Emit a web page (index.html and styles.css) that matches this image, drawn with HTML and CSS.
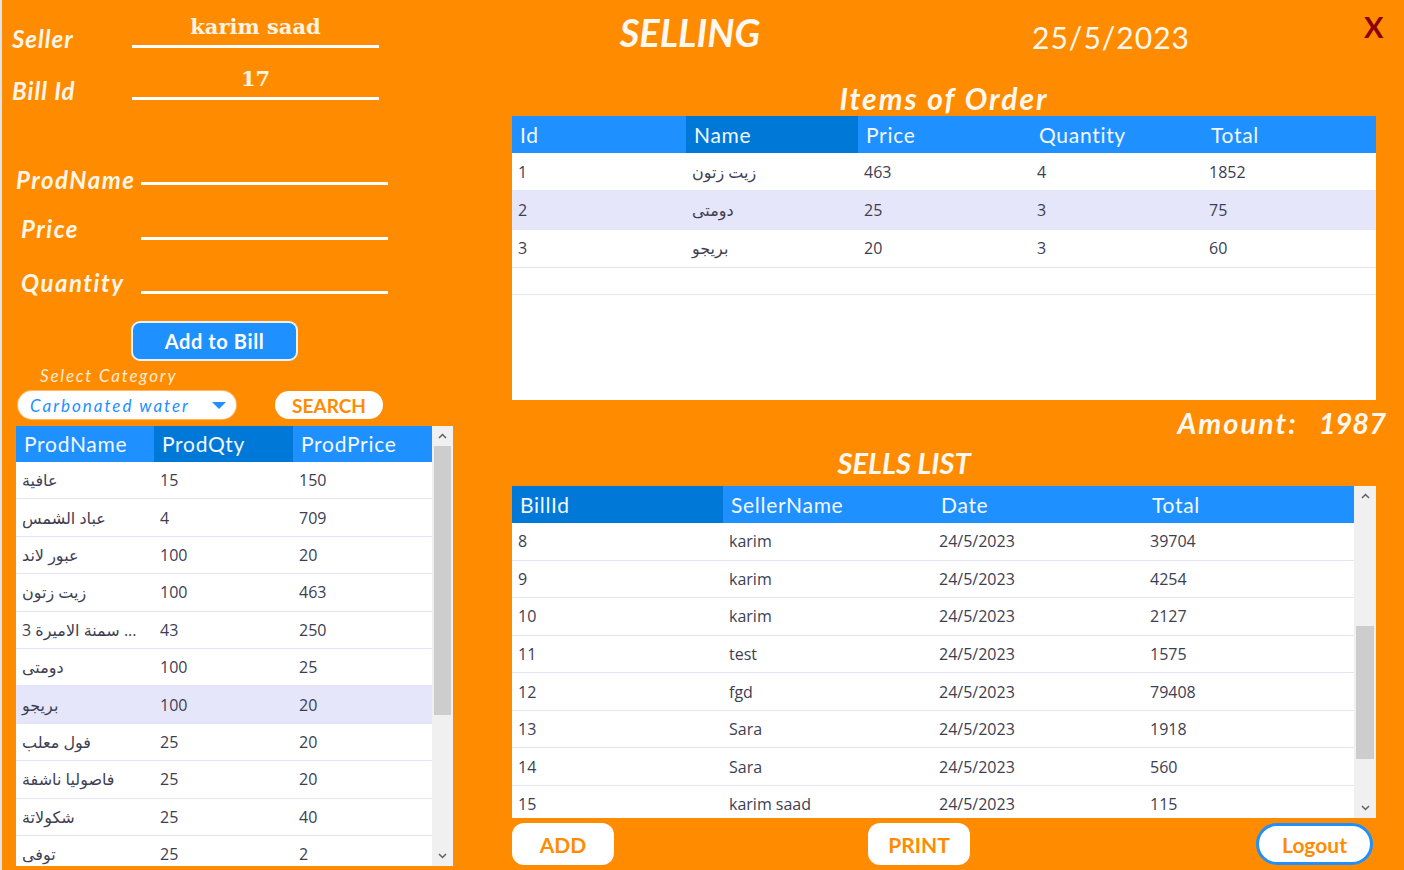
FILE: index.html
```html
<!DOCTYPE html>
<html lang="en">
<head>
<meta charset="utf-8">
<title>Selling</title>
<link rel="stylesheet" href="styles.css">
</head>
<body>
<div class="app">
  <aside class="left">
    <div class="id-row first">
      <span class="id-label">Seller</span>
      <div class="id-val">karim saad</div>
    </div>
    <div class="id-row second">
      <span class="id-label">Bill Id</span>
      <div class="id-val">17</div>
    </div>

    <div class="prod-row r-name">
      <span class="prod-label tight">ProdName</span>
      <div class="prod-line l-name"></div>
    </div>
    <div class="prod-row r-price">
      <span class="prod-label">Price</span>
      <div class="prod-line"></div>
    </div>
    <div class="prod-row r-qty">
      <span class="prod-label">Quantity</span>
      <div class="prod-line"></div>
    </div>

    <button class="btn-add-bill">Add to Bill</button>

    <div class="cat-label">Select Category</div>
    <div class="filter-row">
      <div class="combo">
        <span class="combo-text">Carbonated water</span>
        <svg class="combo-arrow" width="14" height="8" viewBox="0 0 14 8"><path d="M0 0 H14 L7 7 Z" fill="#1E90FF"/></svg>
      </div>
      <button class="btn-search">SEARCH</button>
    </div>

    <div class="grid-box prod-box">
      <div class="grid-main">
        <div class="ghead prod-cols">
          <div class="hc">ProdName</div>
          <div class="hc dark">ProdQty</div>
          <div class="hc">ProdPrice</div>
        </div>
        <div class="grow prod-cols"><div>عافية</div><div>15</div><div>150</div></div>
        <div class="grow prod-cols"><div>عباد الشمس</div><div>4</div><div>709</div></div>
        <div class="grow prod-cols"><div>عبور لاند</div><div>100</div><div>20</div></div>
        <div class="grow prod-cols"><div>زيت زتون</div><div>100</div><div>463</div></div>
        <div class="grow prod-cols"><div>سمنة الاميرة 3 ...</div><div>43</div><div>250</div></div>
        <div class="grow prod-cols"><div>دومتى</div><div>100</div><div>25</div></div>
        <div class="grow prod-cols sel"><div>بريجو</div><div>100</div><div>20</div></div>
        <div class="grow prod-cols"><div>فول معلب</div><div>25</div><div>20</div></div>
        <div class="grow prod-cols"><div>فاصوليا ناشفة</div><div>25</div><div>20</div></div>
        <div class="grow prod-cols"><div>شكولاتة</div><div>25</div><div>40</div></div>
        <div class="grow prod-cols"><div>توفى</div><div>25</div><div>2</div></div>
      </div>
      <div class="vscroll prod-scroll">
        <div class="sarrow"><svg width="9" height="6" viewBox="0 0 9 6"><path d="M1 5 L4.5 1.5 L8 5" fill="none" stroke="#606060" stroke-width="1.5"/></svg></div>
        <div class="strack"><div class="sthumb"></div></div>
        <div class="sarrow"><svg width="9" height="6" viewBox="0 0 9 6"><path d="M1 1 L4.5 4.5 L8 1" fill="none" stroke="#606060" stroke-width="1.5"/></svg></div>
      </div>
    </div>
  </aside>

  <main class="right">
    <header class="top">
      <h1 class="title">SELLING</h1>
      <div class="date">25/5/2023</div>
      <div class="close">X</div>
    </header>

    <h2 class="sec-title items-title">Items of Order</h2>
    <div class="grid-box order-box">
      <div class="grid-main">
        <div class="ghead order-cols">
          <div class="hc">Id</div>
          <div class="hc dark">Name</div>
          <div class="hc">Price</div>
          <div class="hc">Quantity</div>
          <div class="hc">Total</div>
        </div>
        <div class="grow orow order-cols"><div>1</div><div>زيت زتون</div><div>463</div><div>4</div><div>1852</div></div>
        <div class="grow orow order-cols sel"><div>2</div><div>دومتى</div><div>25</div><div>3</div><div>75</div></div>
        <div class="grow orow order-cols"><div>3</div><div>بريجو</div><div>20</div><div>3</div><div>60</div></div>
        <div class="grow newrow order-cols"></div>
      </div>
    </div>

    <div class="amount"><span class="amount-label">Amount:</span><span class="amount-value">1987</span></div>

    <h2 class="sec-title sells-title">SELLS LIST</h2>
    <div class="grid-box sells-box">
      <div class="grid-main">
        <div class="ghead sells-cols">
          <div class="hc dark">BillId</div>
          <div class="hc">SellerName</div>
          <div class="hc">Date</div>
          <div class="hc">Total</div>
        </div>
        <div class="grow srow sells-cols"><div>8</div><div>karim</div><div>24/5/2023</div><div>39704</div></div>
        <div class="grow srow sells-cols"><div>9</div><div>karim</div><div>24/5/2023</div><div>4254</div></div>
        <div class="grow srow sells-cols"><div>10</div><div>karim</div><div>24/5/2023</div><div>2127</div></div>
        <div class="grow srow sells-cols"><div>11</div><div>test</div><div>24/5/2023</div><div>1575</div></div>
        <div class="grow srow sells-cols"><div>12</div><div>fgd</div><div>24/5/2023</div><div>79408</div></div>
        <div class="grow srow sells-cols"><div>13</div><div>Sara</div><div>24/5/2023</div><div>1918</div></div>
        <div class="grow srow sells-cols"><div>14</div><div>Sara</div><div>24/5/2023</div><div>560</div></div>
        <div class="grow srow sells-cols"><div>15</div><div>karim saad</div><div>24/5/2023</div><div>115</div></div>
      </div>
      <div class="vscroll sells-scroll">
        <div class="sarrow"><svg width="9" height="6" viewBox="0 0 9 6"><path d="M1 5 L4.5 1.5 L8 5" fill="none" stroke="#606060" stroke-width="1.5"/></svg></div>
        <div class="strack"><div class="sthumb"></div></div>
        <div class="sarrow"><svg width="9" height="6" viewBox="0 0 9 6"><path d="M1 1 L4.5 4.5 L8 1" fill="none" stroke="#606060" stroke-width="1.5"/></svg></div>
      </div>
    </div>

    <div class="actions">
      <button class="btn-white btn-addbtn">ADD</button>
      <button class="btn-white btn-print">PRINT</button>
      <button class="btn-white btn-logout">Logout</button>
    </div>
  </main>
</div>
</body>
</html>
```

FILE: styles.css
```css
* { box-sizing: border-box; }

html, body {
  margin: 0;
  padding: 0;
}

body {
  width: 1404px;
  height: 870px;
  overflow: hidden;
  background: #FF8C00;
  font-family: "Lato", "DejaVu Sans", sans-serif;
  color: #fff;
}

.app {
  display: flex;
  width: 1404px;
  height: 870px;
  border-left: 2px solid #dde3ea;
}

/* ---------- left column ---------- */
.left {
  width: 453px;
  flex: none;
  display: flex;
  flex-direction: column;
}

.id-row {
  display: grid;
  grid-template-columns: 130px 247px;
  height: 36px;
  align-items: end;
}
.id-row.first { margin-top: 12px; }
.id-row.second { margin-top: 16px; }

.id-label {
  padding-left: 10px;
  font-size: 24px;
  font-weight: 700;
  font-style: italic;
  letter-spacing: 1px;
  line-height: 26px;
  margin-bottom: -4px;
  color: #FFF6EA;
}

.id-val {
  height: 36px;
  border-bottom: 3px solid #fff;
  text-align: center;
  font-family: "DejaVu Serif", "Liberation Serif", serif;
  font-weight: 700;
  font-size: 21px;
  line-height: 30px;
  color: #FFF3E2;
}

.prod-row {
  display: grid;
  grid-template-columns: 139px 247px;
  height: 30px;
  align-items: start;
}
.r-name { margin-top: 65px; }
.r-price { margin-top: 19px; }
.r-qty { margin-top: 24px; }

.prod-label {
  padding-left: 19px;
  font-size: 24px;
  font-weight: 700;
  font-style: italic;
  letter-spacing: 1.5px;
  line-height: 30px;
  color: #FFF6EA;
  white-space: nowrap;
}
.prod-label.tight { padding-left: 14px; }

.prod-line {
  height: 3px;
  background: #fff;
  margin-top: 23px;
}
.prod-line.l-name { margin-top: 17px; }

.btn-add-bill {
  width: 167px;
  height: 40px;
  margin: 23px 0 0 129px;
  background: #1E90FF;
  border: 2px solid #E6F2FF;
  border-radius: 9px;
  color: #fff;
  font-family: "Lato", sans-serif;
  font-weight: 700;
  font-size: 20px;
  letter-spacing: 0.6px;
  padding: 0;
}

.cat-label {
  margin-top: 5px;
  padding-left: 38px;
  font-size: 17px;
  font-style: italic;
  letter-spacing: 1.8px;
  line-height: 20px;
  color: #FFEBD2;
}

.filter-row {
  display: flex;
  margin-top: 5px;
  height: 28px;
}

.combo {
  margin-left: 16px;
  width: 218px;
  height: 28px;
  background: #fff;
  border-radius: 14px;
  box-shadow: 0 0 0 1px #FFB866;
  display: flex;
  align-items: center;
  justify-content: space-between;
  padding: 0 10px 0 12px;
}
.combo-text {
  color: #1E90FF;
  font-style: italic;
  font-size: 17px;
  letter-spacing: 2px;
  white-space: nowrap;
}
.combo-arrow { margin-top: 2px; flex: none; }

.btn-search {
  margin-left: 39px;
  width: 108px;
  height: 28px;
  background: #fff;
  border: none;
  border-radius: 14px;
  color: #FF8C00;
  font-family: "Lato", sans-serif;
  font-weight: 700;
  font-size: 19px;
  padding: 0;
}

/* ---------- grids ---------- */
.grid-box {
  display: flex;
  background: #fff;
  overflow: hidden;
}
.grid-main {
  flex: 1;
  overflow: hidden;
}

.ghead {
  display: grid;
  background: #1E90FF;
}
.hc {
  padding-left: 8px;
  font-size: 21px;
  letter-spacing: 0.7px;
  color: #F2F8FF;
  white-space: nowrap;
}
.hc.dark { background: #0078D7; }

.grow {
  display: grid;
  align-items: center;
  border-bottom: 1px solid #E4E4F8;
  font-family: "Open Sans", "DejaVu Sans", sans-serif;
  font-size: 16px;
  color: #3E3E52;
  white-space: nowrap;
}
.grow > div {
  padding-left: 6px;
  overflow: hidden;
}
.grow.sel { background: #E6E6FA; }

.prod-box {
  margin: 7px 0 0 14px;
  width: 437px;
  height: 440px;
}
.prod-cols { grid-template-columns: 138px 139px 139px; }
.prod-box .ghead { height: 36px; line-height: 36px; }
.prod-box .grow { height: 37.4px; }

.vscroll {
  flex: none;
  width: 21px;
  display: flex;
  flex-direction: column;
  background: #F0F0F0;
}
.sarrow {
  height: 20px;
  display: flex;
  align-items: center;
  justify-content: center;
}
.strack {
  flex: 1;
  display: flex;
  flex-direction: column;
}
.sthumb {
  margin: 0 2px;
  background: #CDCDCD;
}
.prod-scroll .sthumb { height: 269px; }
.sells-scroll .strack { padding-top: 120px; }
.sells-scroll .sthumb { height: 133px; }

/* ---------- right column ---------- */
.right {
  width: 864px;
  flex: none;
  margin-left: 57px;
  display: flex;
  flex-direction: column;
}

.top {
  display: grid;
  grid-template-columns: 356px 486px 50px;
  height: 70px;
  margin-right: -28px;
  align-items: start;
}
.title {
  margin: 0;
  padding-top: 10px;
  text-align: center;
  font-size: 38px;
  font-weight: 700;
  font-style: italic;
  line-height: 44px;
  color: #FFF8F0;
}
.date {
  padding-top: 17px;
  text-align: center;
  font-size: 30px;
  letter-spacing: 1px;
  line-height: 40px;
  color: #FFF8F0;
}
.close {
  padding-top: 9px;
  padding-left: 10px;
  font-size: 29px;
  font-weight: 700;
  line-height: 36px;
  color: #8B0000;
}

.sec-title {
  margin: 0;
  text-align: center;
  font-size: 29px;
  font-weight: 700;
  font-style: italic;
  line-height: 34px;
  color: #FFF8F0;
}
.items-title {
  margin-top: 11px;
  height: 35px;
  font-size: 30px;
  letter-spacing: 2px;
}

.order-box {
  width: 864px;
  height: 284px;
}
.order-cols { grid-template-columns: 174px 172px 173px 172px 173px; }
.order-box .ghead { height: 37px; line-height: 37px; }
.orow { height: 38.3px; }
.newrow { height: 27px; }

.amount {
  display: flex;
  justify-content: flex-end;
  gap: 21px;
  margin-right: -10px;
  margin-top: 6px;
  height: 34px;
  font-size: 29px;
  font-weight: 700;
  font-style: italic;
  line-height: 34px;
  color: #FFF8F0;
}
.amount-label { letter-spacing: 2px; }
.amount-value { letter-spacing: 0; }

.sells-title {
  margin-top: 6px;
  padding-right: 80px;
  height: 40px;
}

.sells-box {
  width: 864px;
  height: 332px;
}
.sells-cols { grid-template-columns: 211px 210px 211px 210px; }
.sells-box .ghead { height: 37px; line-height: 37px; }
.srow { height: 37.57px; }
.sells-box .vscroll { width: 22px; }

.actions {
  display: flex;
  margin-top: 5px;
  height: 42px;
}
.btn-white {
  height: 42px;
  background: #fff;
  border: none;
  border-radius: 12px;
  color: #FF8C00;
  font-family: "Lato", sans-serif;
  font-weight: 700;
  font-size: 21px;
  padding: 0;
}
.btn-addbtn { width: 102px; }
.btn-print { width: 102px; margin-left: 254px; }
.btn-logout {
  width: 117px;
  margin-left: 286px;
  border: 3px solid #1E90FF;
  border-radius: 21px;
}
```
